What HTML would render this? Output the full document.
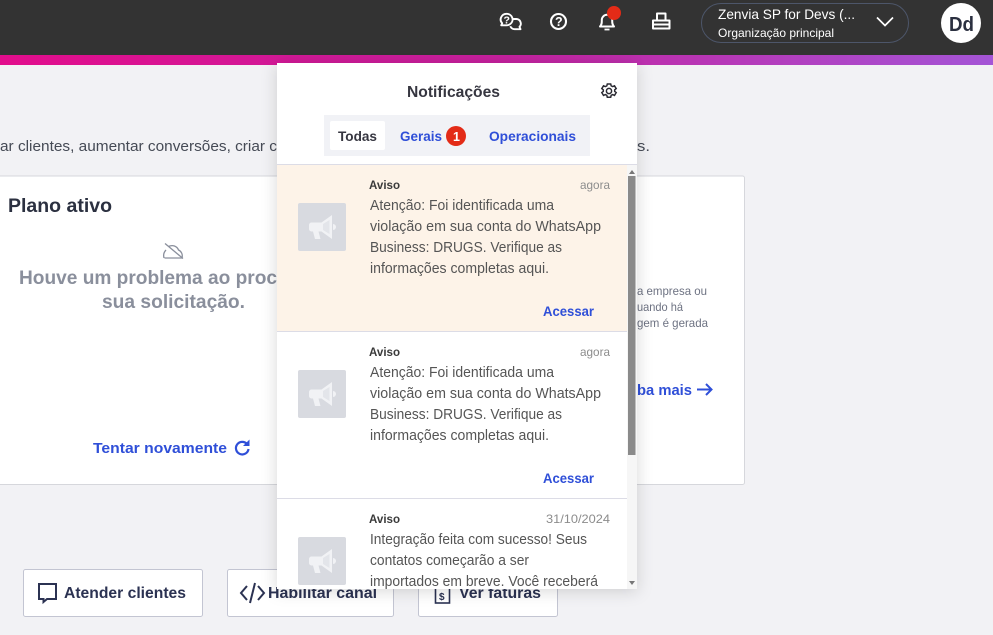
<!DOCTYPE html>
<html lang="pt-BR"><head><meta charset="utf-8"><title>Notificações</title>
<style>
html,body{margin:0;padding:0;width:993px;height:635px;overflow:hidden;background:#f2f2f5}
svg{display:block}
text{font-family:"Liberation Sans",sans-serif;white-space:pre}
.body{font-size:14.5px;fill:#555}
.av{font-size:11.5px;font-weight:700;fill:#3a3a3a}
.time{font-size:12px;fill:#8c8c8c}
.link{font-size:13.5px;font-weight:700;fill:#2f4fd8}
.btn{font-size:16px;font-weight:700;fill:#2b3252}
</style></head><body>
<svg xmlns="http://www.w3.org/2000/svg" width="993" height="635" viewBox="0 0 993 635">
<defs>
<linearGradient id="g" x1="0" x2="1" y1="0" y2="0"><stop offset="0" stop-color="#e20d8c"/><stop offset=".5" stop-color="#c6209e"/><stop offset="1" stop-color="#a455d6"/></linearGradient>
<filter id="s" x="-10%" y="-10%" width="120%" height="120%"><feDropShadow dx="0" dy="2" stdDeviation="8" flood-color="#000" flood-opacity=".16"/></filter>
<clipPath id="list"><rect x="277" y="165" width="350" height="424"/></clipPath>
<g id="mega"><rect width="48" height="48" rx="2" fill="#d8dae0"/><path d="M13.500 19.500h10l10.500-7.500v24l-10.500-7.500h-3l2 7.500h-5.500l-2-7.500h-1.500a2.500 2.500 0 0 1-2.500-2.500v-4a2.500 2.500 0 0 1 2.500-2.500z" fill="#f1f2f5"/><path d="M25 21v6l6.500 4v-14z" fill="#e3e5ea"/><path d="M35 21a3 3 0 0 1 0 6z" fill="#f1f2f5"/></g>
</defs>
<rect width="993" height="635" fill="#f2f2f5"/>

<!-- page body -->
<text x="0" y="151" font-size="15" fill="#454a55" textLength="277" lengthAdjust="spacingAndGlyphs">ar clientes, aumentar conversões, criar c</text>
<text x="637" y="151" font-size="15" fill="#454a55" textLength="13" lengthAdjust="spacingAndGlyphs">s.</text>
<rect x="-2" y="176" width="746.500" height="308.500" rx="2" fill="#fff" stroke="#d6d7dc"/>
<text x="8" y="212" font-size="19.500" font-weight="700" fill="#2b3040" textLength="104" lengthAdjust="spacingAndGlyphs">Plano ativo</text>
<g fill="none" stroke="#8a8f9c" stroke-width="1.300"><path d="M164.500 258h17.500c1-4-1-7-3.500-8-1.500-4-6-5.500-10-3.500M166 250c-2 2-2.800 5-2 8"/><path d="M165 243.500l18 15"/></g>
<text x="19" y="284" font-size="19.500" font-weight="700" fill="#8a8f9c" textLength="258" lengthAdjust="spacingAndGlyphs">Houve um problema ao proc</text>
<text x="102" y="308" font-size="19.500" font-weight="700" fill="#8a8f9c" textLength="143" lengthAdjust="spacingAndGlyphs">sua solicitação.</text>
<text x="93" y="453" font-size="15" font-weight="700" fill="#2f4fd8" textLength="134" lengthAdjust="spacingAndGlyphs">Tentar novamente</text>
<g fill="none" stroke="#2f4fd8" stroke-width="2.200"><path d="M247 444a6.300 6.300 0 1 0 1.500 5"/></g><path d="M243 446l6.500 0v-6.500z" fill="#2f4fd8"/>
<text x="637" y="295" font-size="12" fill="#6d7282" textLength="70" lengthAdjust="spacingAndGlyphs">a empresa ou</text>
<text x="637" y="311" font-size="12" fill="#6d7282" textLength="46" lengthAdjust="spacingAndGlyphs">uando há</text>
<text x="637" y="327" font-size="12" fill="#6d7282" textLength="71" lengthAdjust="spacingAndGlyphs">gem é gerada</text>
<text x="637" y="395" font-size="15" font-weight="700" fill="#2f4fd8" textLength="55" lengthAdjust="spacingAndGlyphs">ba mais</text>
<path d="M697 389.500h14M706 384l5.500 5.500-5.500 5.500" fill="none" stroke="#2f4fd8" stroke-width="2"/>

<!-- buttons -->
<g fill="#fff" stroke="#c3c5d2"><rect x="23.500" y="569.500" width="179" height="47" rx="2"/><rect x="227.500" y="569.500" width="166" height="47" rx="2"/><rect x="418.500" y="569.500" width="139" height="47" rx="2"/></g>
<path d="M39 584h17v15h-9l-3.500 3v-3H39z" fill="none" stroke="#2b3252" stroke-width="2"/>
<text x="64" y="598" class="btn" textLength="122" lengthAdjust="spacingAndGlyphs">Atender clientes</text>
<path d="M247 586l-6 7 6 7M258 586l6 7-6 7M255 583l-5 20" fill="none" stroke="#2b3252" stroke-width="2"/>
<text x="268" y="598" class="btn" textLength="109" lengthAdjust="spacingAndGlyphs">Habilitar canal</text>
<rect x="435.500" y="585" width="14" height="18" fill="none" stroke="#2b3252" stroke-width="1.600"/>
<text x="439" y="600" font-size="10" font-weight="700" fill="#2b3252">$</text>
<text x="459" y="598" class="btn" textLength="82" lengthAdjust="spacingAndGlyphs">Ver faturas</text>

<!-- header -->
<rect width="993" height="55" fill="#333"/>
<rect y="55" width="993" height="10" fill="url(#g)"/>
<g fill="none" stroke="#fff" stroke-width="1.900" stroke-linejoin="round">
<path d="M506.500 13.800a6 5.700 0 0 1 4 10 6 5.700 0 0 1-4 1.500h-5.300l1-2a6 5.700 0 0 1 4.300-9.500z"/>
<path d="M513 19h3a4.600 4.600 0 0 1 3.500 7.800l1 2.400h-5.800a4.800 4.800 0 0 1-4.400-3"/>
<circle cx="558.500" cy="21.500" r="7.500" stroke-width="2.100"/>
<path d="M600 26.500c2-2 1.800-4 1.800-6.500a5.200 5.200 0 0 1 10.400 0c0 2.500-.2 4.500 1.800 6.500z" stroke-width="2"/>
<path d="M604.500 29.500h5" stroke-width="1.800"/>
<path d="M657 20v-6.500h8.500V20M653 20.500h16.500v8H653zM653 24.500h16.500" stroke-width="2"/>
</g>
<text x="503.500" y="23.500" font-size="10.500" font-weight="700" fill="#fff">?</text>
<text x="555" y="26" font-size="12.500" font-weight="700" fill="#fff">?</text>
<circle cx="614" cy="13" r="7" fill="#e32b17"/>
<rect x="701.500" y="3.500" width="207" height="39" rx="19.500" fill="#333" stroke="#4d566a"/>
<text x="718" y="19" font-size="14" fill="#fff" textLength="137" lengthAdjust="spacingAndGlyphs">Zenvia SP for Devs (...</text>
<text x="718" y="37" font-size="12" fill="#fff" textLength="116" lengthAdjust="spacingAndGlyphs">Organização principal</text>
<path d="M877 17.500l8 8 8-8" fill="none" stroke="#fff" stroke-width="1.700"/>
<circle cx="961" cy="23" r="20" fill="#fff"/>
<text x="949" y="31" font-size="20" font-weight="700" fill="#2b3040" textLength="25" lengthAdjust="spacingAndGlyphs">Dd</text>

<!-- notification panel -->
<rect x="277" y="63" width="360" height="526" fill="#fff" filter="url(#s)"/>
<text x="407" y="97" font-size="15.500" font-weight="700" fill="#363640" textLength="93" lengthAdjust="spacingAndGlyphs">Notificações</text>
<g fill="none" stroke="#2b2b33" stroke-width="1.500"><circle cx="609" cy="91" r="2.600"/><path d="M607.300 84h3.400l.5 1.900 1.500.7 1.800-.8 1.700 2.800-1.500 1.200v1.600l1.500 1.200-1.700 2.800-1.800-.8-1.500.7-.5 1.900h-3.400l-.5-1.900-1.500-.7-1.800.8-1.700-2.800 1.500-1.200v-1.600l-1.500-1.200 1.700-2.800 1.800.8 1.500-.7z"/></g>
<rect x="324" y="115" width="266" height="41" fill="#f1f2f6"/>
<rect x="330" y="121" width="55" height="29" rx="2" fill="#fff"/>
<text x="338" y="141" font-size="14" font-weight="700" fill="#363640" textLength="39" lengthAdjust="spacingAndGlyphs">Todas</text>
<text x="400" y="141" font-size="14" font-weight="700" fill="#2f4fd8" textLength="42" lengthAdjust="spacingAndGlyphs">Gerais</text>
<circle cx="456" cy="136" r="10" fill="#e32b17"/>
<text x="453" y="141" font-size="12.500" font-weight="700" fill="#fff">1</text>
<text x="489" y="141" font-size="14" font-weight="700" fill="#2f4fd8" textLength="87" lengthAdjust="spacingAndGlyphs">Operacionais</text>
<rect x="277" y="164" width="360" height="1" fill="#dcdce6"/>

<g clip-path="url(#list)">
<rect x="277" y="165" width="350" height="166" fill="#fdf3e8"/>
<rect x="277" y="331" width="350" height="1" fill="#dcdce6"/>
<rect x="277" y="498" width="350" height="1" fill="#dcdce6"/>

<use href="#mega" x="298" y="203"/>
<text x="369" y="189" class="av" textLength="31" lengthAdjust="spacingAndGlyphs">Aviso</text>
<text x="580" y="189" class="time" textLength="30" lengthAdjust="spacingAndGlyphs">agora</text>
<text x="370" y="210" class="body" textLength="184" lengthAdjust="spacingAndGlyphs">Atenção: Foi identificada uma</text>
<text x="370" y="231" class="body" textLength="231" lengthAdjust="spacingAndGlyphs">violação em sua conta do WhatsApp</text>
<text x="370" y="252" class="body" textLength="192" lengthAdjust="spacingAndGlyphs">Business: DRUGS. Verifique as</text>
<text x="370" y="273" class="body" textLength="179" lengthAdjust="spacingAndGlyphs">informações completas aqui.</text>
<text x="543" y="316" class="link" textLength="51" lengthAdjust="spacingAndGlyphs">Acessar</text>

<use href="#mega" x="298" y="370"/>
<text x="369" y="356" class="av" textLength="31" lengthAdjust="spacingAndGlyphs">Aviso</text>
<text x="580" y="356" class="time" textLength="30" lengthAdjust="spacingAndGlyphs">agora</text>
<text x="370" y="377" class="body" textLength="184" lengthAdjust="spacingAndGlyphs">Atenção: Foi identificada uma</text>
<text x="370" y="398" class="body" textLength="231" lengthAdjust="spacingAndGlyphs">violação em sua conta do WhatsApp</text>
<text x="370" y="419" class="body" textLength="192" lengthAdjust="spacingAndGlyphs">Business: DRUGS. Verifique as</text>
<text x="370" y="440" class="body" textLength="179" lengthAdjust="spacingAndGlyphs">informações completas aqui.</text>
<text x="543" y="483" class="link" textLength="51" lengthAdjust="spacingAndGlyphs">Acessar</text>

<use href="#mega" x="298" y="537"/>
<text x="369" y="523" class="av" textLength="31" lengthAdjust="spacingAndGlyphs">Aviso</text>
<text x="546" y="523" class="time" textLength="64" lengthAdjust="spacingAndGlyphs">31/10/2024</text>
<text x="370" y="544" class="body" textLength="217" lengthAdjust="spacingAndGlyphs">Integração feita com sucesso! Seus</text>
<text x="370" y="565" class="body" textLength="159" lengthAdjust="spacingAndGlyphs">contatos começarão a ser</text>
<text x="370" y="586" class="body" textLength="228" lengthAdjust="spacingAndGlyphs">importados em breve. Você receberá</text>
</g>

<!-- scrollbar -->
<rect x="627" y="165" width="10" height="424" fill="#f6f6f6"/>
<path d="M632 170l-3 4h6z M632 585l-3-4h6z" fill="#777"/>
<rect x="628" y="176" width="7.500" height="279" fill="#8a8a8a"/>
</svg>
</body></html>
